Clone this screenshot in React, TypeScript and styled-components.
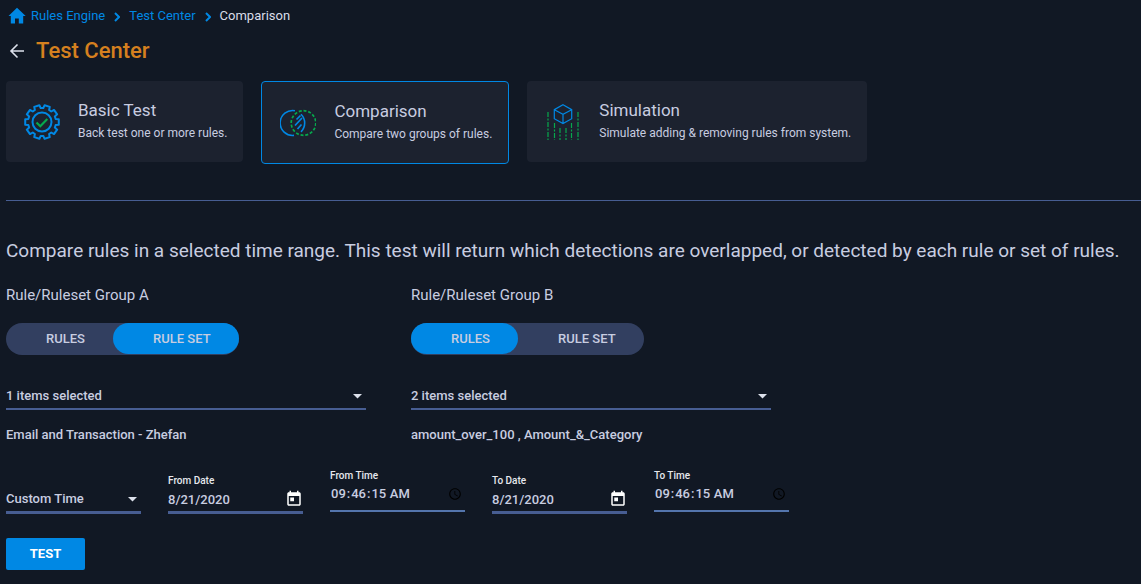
import React from "react";
import styled, { createGlobalStyle, css } from "styled-components";

const c = {
  bg: "#111824",
  card: "#1c222f",
  text: "#c8cde0",
  blue: "#0088e4",
  line: "#475d92",
  pill: "#323f60",
  orange: "#d5801f",
  green: "#06a94d",
};

const GlobalStyle = createGlobalStyle`
  * { box-sizing: border-box; }
  body {
    margin: 0;
    background: ${c.bg};
    color: ${c.text};
    font: 500 13px/20px Roboto, sans-serif;
  }
  button, input, select { font: inherit; color: inherit; }
  h1, h2, h3, p { margin: 0; }
`;

const Page = styled.main`
  padding: 6px 0 14px 6px;
`;

const Breadcrumbs = styled.nav`
  display: flex;
  align-items: center;
  height: 20px;
  font-weight: 400;
`;

const Crumb = styled.a`
  display: flex;
  align-items: center;
  gap: 4px;
  color: ${c.blue};
  text-decoration: none;
`;

const CurrentCrumb = styled.span`
  color: #d9dde8;
`;

const Separator = styled.svg`
  width: 6px;
  height: 10px;
  margin: 1px 9px 0;
`;

const TitleRow = styled.header`
  display: flex;
  align-items: center;
  gap: 10px;
  height: 32px;
  margin-top: 9px;
`;

const BackButton = styled.button`
  display: flex;
  padding: 0 2px;
  border: 0;
  background: none;
`;

const Title = styled.h1`
  color: ${c.orange};
  font-size: 22px;
  font-weight: 500;
  line-height: 32px;
`;

const Cards = styled.div`
  display: flex;
  flex-wrap: wrap;
  align-items: flex-start;
  gap: 18px;
  margin-top: 14px;
`;

const Card = styled.button<{ $active?: boolean }>`
  display: flex;
  align-items: center;
  gap: 18px;
  padding: 18px 16px 18px 18px;
  border: 0;
  border-radius: 4px;
  background: ${c.card};
  text-align: left;
  ${(p) => p.$active && css`border: 1px solid ${c.blue};`}
`;

const CardText = styled.span`
  display: flex;
  flex-direction: column;
  height: 45px;
`;

const CardTitle = styled.span`
  font-size: 17px;
  font-weight: 400;
  line-height: 23px;
`;

const CardNote = styled.span`
  font-size: 12px;
  font-weight: 400;
  line-height: 22px;
`;

const Divider = styled.hr`
  height: 1px;
  margin: 36px 0 0;
  border: 0;
  background: ${c.line};
`;

const Intro = styled.h2`
  margin-top: 38px;
  font-size: 19px;
  font-weight: 400;
  line-height: 24px;
`;

const Groups = styled.div`
  display: flex;
  flex-wrap: wrap;
  gap: 45px;
  margin-top: 22px;
`;

const Group = styled.section`
  width: 360px;
`;

const GroupTitle = styled.h3`
  font-size: 15px;
  font-weight: 400;
  line-height: 20px;
`;

const Toggle = styled.div`
  display: inline-flex;
  align-items: flex-start;
  height: 32px;
  margin-top: 18px;
  border-radius: 16px;
  background: ${c.pill};
`;

const ToggleButton = styled.button<{ $on: boolean; $wide?: boolean }>`
  width: ${(p) => (p.$wide ? 126 : 107)}px;
  height: 31px;
  padding: 0 0 0 40px;
  border: 0;
  border-radius: 16px;
  background: ${(p) => (p.$on ? c.blue : "transparent")};
  text-align: left;
`;

const SelectBox = styled.div<{ $thick?: boolean }>`
  display: flex;
  align-items: center;
  border-bottom: ${(p) => (p.$thick ? 3 : 2)}px solid ${c.line};
`;

const Select = styled.select`
  flex: 1;
  min-width: 0;
  height: 24px;
  padding: 0;
  border: 0;
  appearance: none;
  background: none;
`;

const Caret = styled.svg`
  width: 9px;
  height: 5px;
  margin: 0 4px;
  pointer-events: none;
`;

const GroupSelect = styled(SelectBox)`
  margin-top: 29px;
`;

const Selection = styled.p`
  margin-top: 15px;
`;

const Fields = styled.div`
  display: flex;
  flex-wrap: wrap;
  align-items: flex-end;
  gap: 27px;
  margin-top: 25px;
`;

const Field = styled.div`
  width: 135px;
`;

const TimeField = styled(Field)`
  padding-bottom: 2px;
`;

const FieldLabel = styled.label`
  display: block;
  color: #e6e8ee;
  font-size: 10px;
  line-height: 12px;
`;

const InputBox = styled.div`
  display: flex;
  align-items: center;
  border-bottom: 3px solid ${c.line};
`;

const DateInput = styled.input`
  flex: 1;
  min-width: 0;
  height: 24px;
  padding: 0;
  border: 0;
  background: none;
`;

const IconButton = styled.button`
  display: flex;
  padding: 0;
  border: 0;
  background: none;
`;

const TimeInput = styled.input`
  display: block;
  width: 100%;
  height: 30px;
  padding: 0 0 4px;
  border: 0;
  border-bottom: 2px solid #5475ad;
  background: none;
`;

const Submit = styled.button`
  display: block;
  width: 79px;
  height: 32px;
  margin-top: 24px;
  border: 0;
  border-radius: 2px;
  background: ${c.blue};
  color: #fff;
  font-weight: 700;
`;

const HomeIcon = () => (
  <svg width="21" height="18" viewBox="0 0 21 18" aria-hidden="true">
    <path d="M11 .8 2.500 9h2.300v7.500h4.200v-5h3.800v5h4.400V9h2.500z" fill={c.blue} />
  </svg>
);

const Chevron = () => (
  <Separator viewBox="0 0 6 10" aria-hidden="true">
    <path d="M1 1l4 4-4 4" fill="none" stroke={c.blue} strokeWidth="2" />
  </Separator>
);

const DownCaret = () => (
  <Caret viewBox="0 0 9 5" aria-hidden="true">
    <path d="M0 0h9L4.500 4.500z" fill="#dde1ec" />
  </Caret>
);

const CalendarIcon = () => (
  <svg width="18" height="18" viewBox="0 0 24 24" aria-hidden="true">
    <path
      fill="#fff"
      d="M19 3h-1V1h-2v2H8V1H6v2H5c-1.110 0-1.990.9-1.990 2L3 19c0 1.100.89 2 2 2h14c1.100 0 2-.9 2-2V5c0-1.100-.9-2-2-2zm0 16H5V8h14v11zM7 10h5v5H7z"
    />
  </svg>
);

const gearPath = (() => {
  const teeth = 10;
  const points: string[] = [];
  for (let i = 0; i < teeth; i++) {
    const mid = (i / teeth) * 2 * Math.PI - Math.PI / 2 + Math.PI / teeth;
    [
      [-0.22, 14],
      [-0.16, 17],
      [0.16, 17],
      [0.22, 14],
    ].forEach(([da, r]) => {
      points.push(`${(18 + r * Math.cos(mid + da)).toFixed(2)} ${(18 + r * Math.sin(mid + da)).toFixed(2)}`);
    });
  }
  return `M${points.join("L")}Z`;
})();

const GearIcon = () => (
  <svg width="36" height="36" viewBox="0 0 36 36" fill="none" aria-hidden="true">
    <path d={gearPath} stroke={c.blue} strokeWidth="2" strokeLinejoin="round" />
    <circle cx="18" cy="18" r="9.500" stroke={c.blue} strokeWidth="2" />
    <path d="M12.500 18.500l3.800 3.700 7-7.200" stroke={c.green} strokeWidth="2.200" />
  </svg>
);

const OverlapIcon = () => (
  <svg width="36" height="36" viewBox="0 0 36 36" fill="none" aria-hidden="true">
    <path d="M15 5.700A12.500 12.500 0 1 0 14 30.400" stroke={c.blue} strokeWidth="1.600" />
    <path d="M21 9.200a12.500 12.500 0 0 1 0 17.700" stroke={c.blue} strokeWidth="1.600" />
    <circle cx="23.500" cy="18" r="12.300" stroke={c.green} strokeWidth="1.700" strokeDasharray="3 1.800" />
    <path d="M16.500 14.500l4-4M15 20.500l7-7.500M17.500 24l4-4.500" stroke={c.blue} strokeWidth="1.700" />
  </svg>
);

const CubeIcon = () => (
  <svg width="36" height="36" viewBox="0 0 36 36" fill="none" aria-hidden="true">
    <path d="M18 .7l8.700 5v9L18 19.500l-8.700-4.800v-9zM9.300 5.700L18 10.200l8.700-4.500M18 10.200v9.300" stroke={c.blue} strokeWidth="1.200" />
    <path d="M3 8v28M33 8v28M9.500 19v17M26.500 19v17M15 24v12M21 24v12" stroke={c.green} strokeWidth="1.200" strokeDasharray="5 1.500 2 1.500" />
  </svg>
);

const cards = [
  { title: "Basic Test", note: "Back test one or more rules.", icon: <GearIcon /> },
  { title: "Comparison", note: "Compare two groups of rules.", icon: <OverlapIcon />, active: true },
  { title: "Simulation", note: "Simulate adding & removing rules from system.", icon: <CubeIcon /> },
];

const groups = [
  { name: "A", set: true, count: "1 items selected", items: "Email and Transaction - Zhefan" },
  { name: "B", set: false, count: "2 items selected", items: "amount_over_100 , Amount_&_Category" },
];

const DateField = ({ label, id }: { label: string; id: string }) => (
  <Field>
    <FieldLabel htmlFor={id}>{label}</FieldLabel>
    <InputBox>
      <DateInput id={id} defaultValue="8/21/2020" />
      <IconButton type="button" aria-label={`Choose ${label}`}>
        <CalendarIcon />
      </IconButton>
    </InputBox>
  </Field>
);

const ClockField = ({ label, id }: { label: string; id: string }) => (
  <TimeField>
    <FieldLabel htmlFor={id}>{label}</FieldLabel>
    <TimeInput id={id} type="time" step="1" defaultValue="09:46:15" />
  </TimeField>
);

export default function App() {
  const [sets, setSets] = React.useState(groups.map((g) => g.set));
  const choose = (index: number, value: boolean) => setSets(sets.map((s, i) => (i === index ? value : s)));

  return (
    <>
      <GlobalStyle />
      <Page>
        <Breadcrumbs aria-label="Breadcrumb">
          <Crumb href="#rules">
            <HomeIcon />
            Rules Engine
          </Crumb>
          <Chevron />
          <Crumb href="#tests">Test Center</Crumb>
          <Chevron />
          <CurrentCrumb aria-current="page">Comparison</CurrentCrumb>
        </Breadcrumbs>
        <TitleRow>
          <BackButton type="button" aria-label="Back">
            <svg width="16" height="16" viewBox="0 0 16 16" fill="none" stroke="#dde1ec" strokeWidth="1.600" aria-hidden="true">
              <path d="M16 8H3M9.500 1.500L3 8l6.500 6.500" />
            </svg>
          </BackButton>
          <Title>Test Center</Title>
        </TitleRow>
        <Cards>
          {cards.map((card) => (
            <Card key={card.title} type="button" $active={card.active} aria-pressed={!!card.active}>
              {card.icon}
              <CardText>
                <CardTitle>{card.title}</CardTitle>
                <CardNote>{card.note}</CardNote>
              </CardText>
            </Card>
          ))}
        </Cards>
        <Divider />
        <Intro>
          Compare rules in a selected time range. This test will return which detections are overlapped, or detected by
          each rule or set of rules.
        </Intro>
        <Groups>
          {groups.map((group, i) => (
            <Group key={group.name}>
              <GroupTitle>Rule/Ruleset Group {group.name}</GroupTitle>
              <Toggle>
                <ToggleButton type="button" $on={!sets[i]} aria-pressed={!sets[i]} onClick={() => choose(i, false)}>
                  RULES
                </ToggleButton>
                <ToggleButton type="button" $wide $on={sets[i]} aria-pressed={sets[i]} onClick={() => choose(i, true)}>
                  RULE SET
                </ToggleButton>
              </Toggle>
              <GroupSelect>
                <Select aria-label={`Group ${group.name} items`}>
                  <option>{group.count}</option>
                </Select>
                <DownCaret />
              </GroupSelect>
              <Selection>{group.items}</Selection>
            </Group>
          ))}
        </Groups>
        <Fields>
          <Field>
            <SelectBox $thick>
              <Select aria-label="Time range">
                <option>Custom Time</option>
              </Select>
              <DownCaret />
            </SelectBox>
          </Field>
          <DateField label="From Date" id="from-date" />
          <ClockField label="From Time" id="from-time" />
          <DateField label="To Date" id="to-date" />
          <ClockField label="To Time" id="to-time" />
        </Fields>
        <Submit type="submit">TEST</Submit>
      </Page>
    </>
  );
}
